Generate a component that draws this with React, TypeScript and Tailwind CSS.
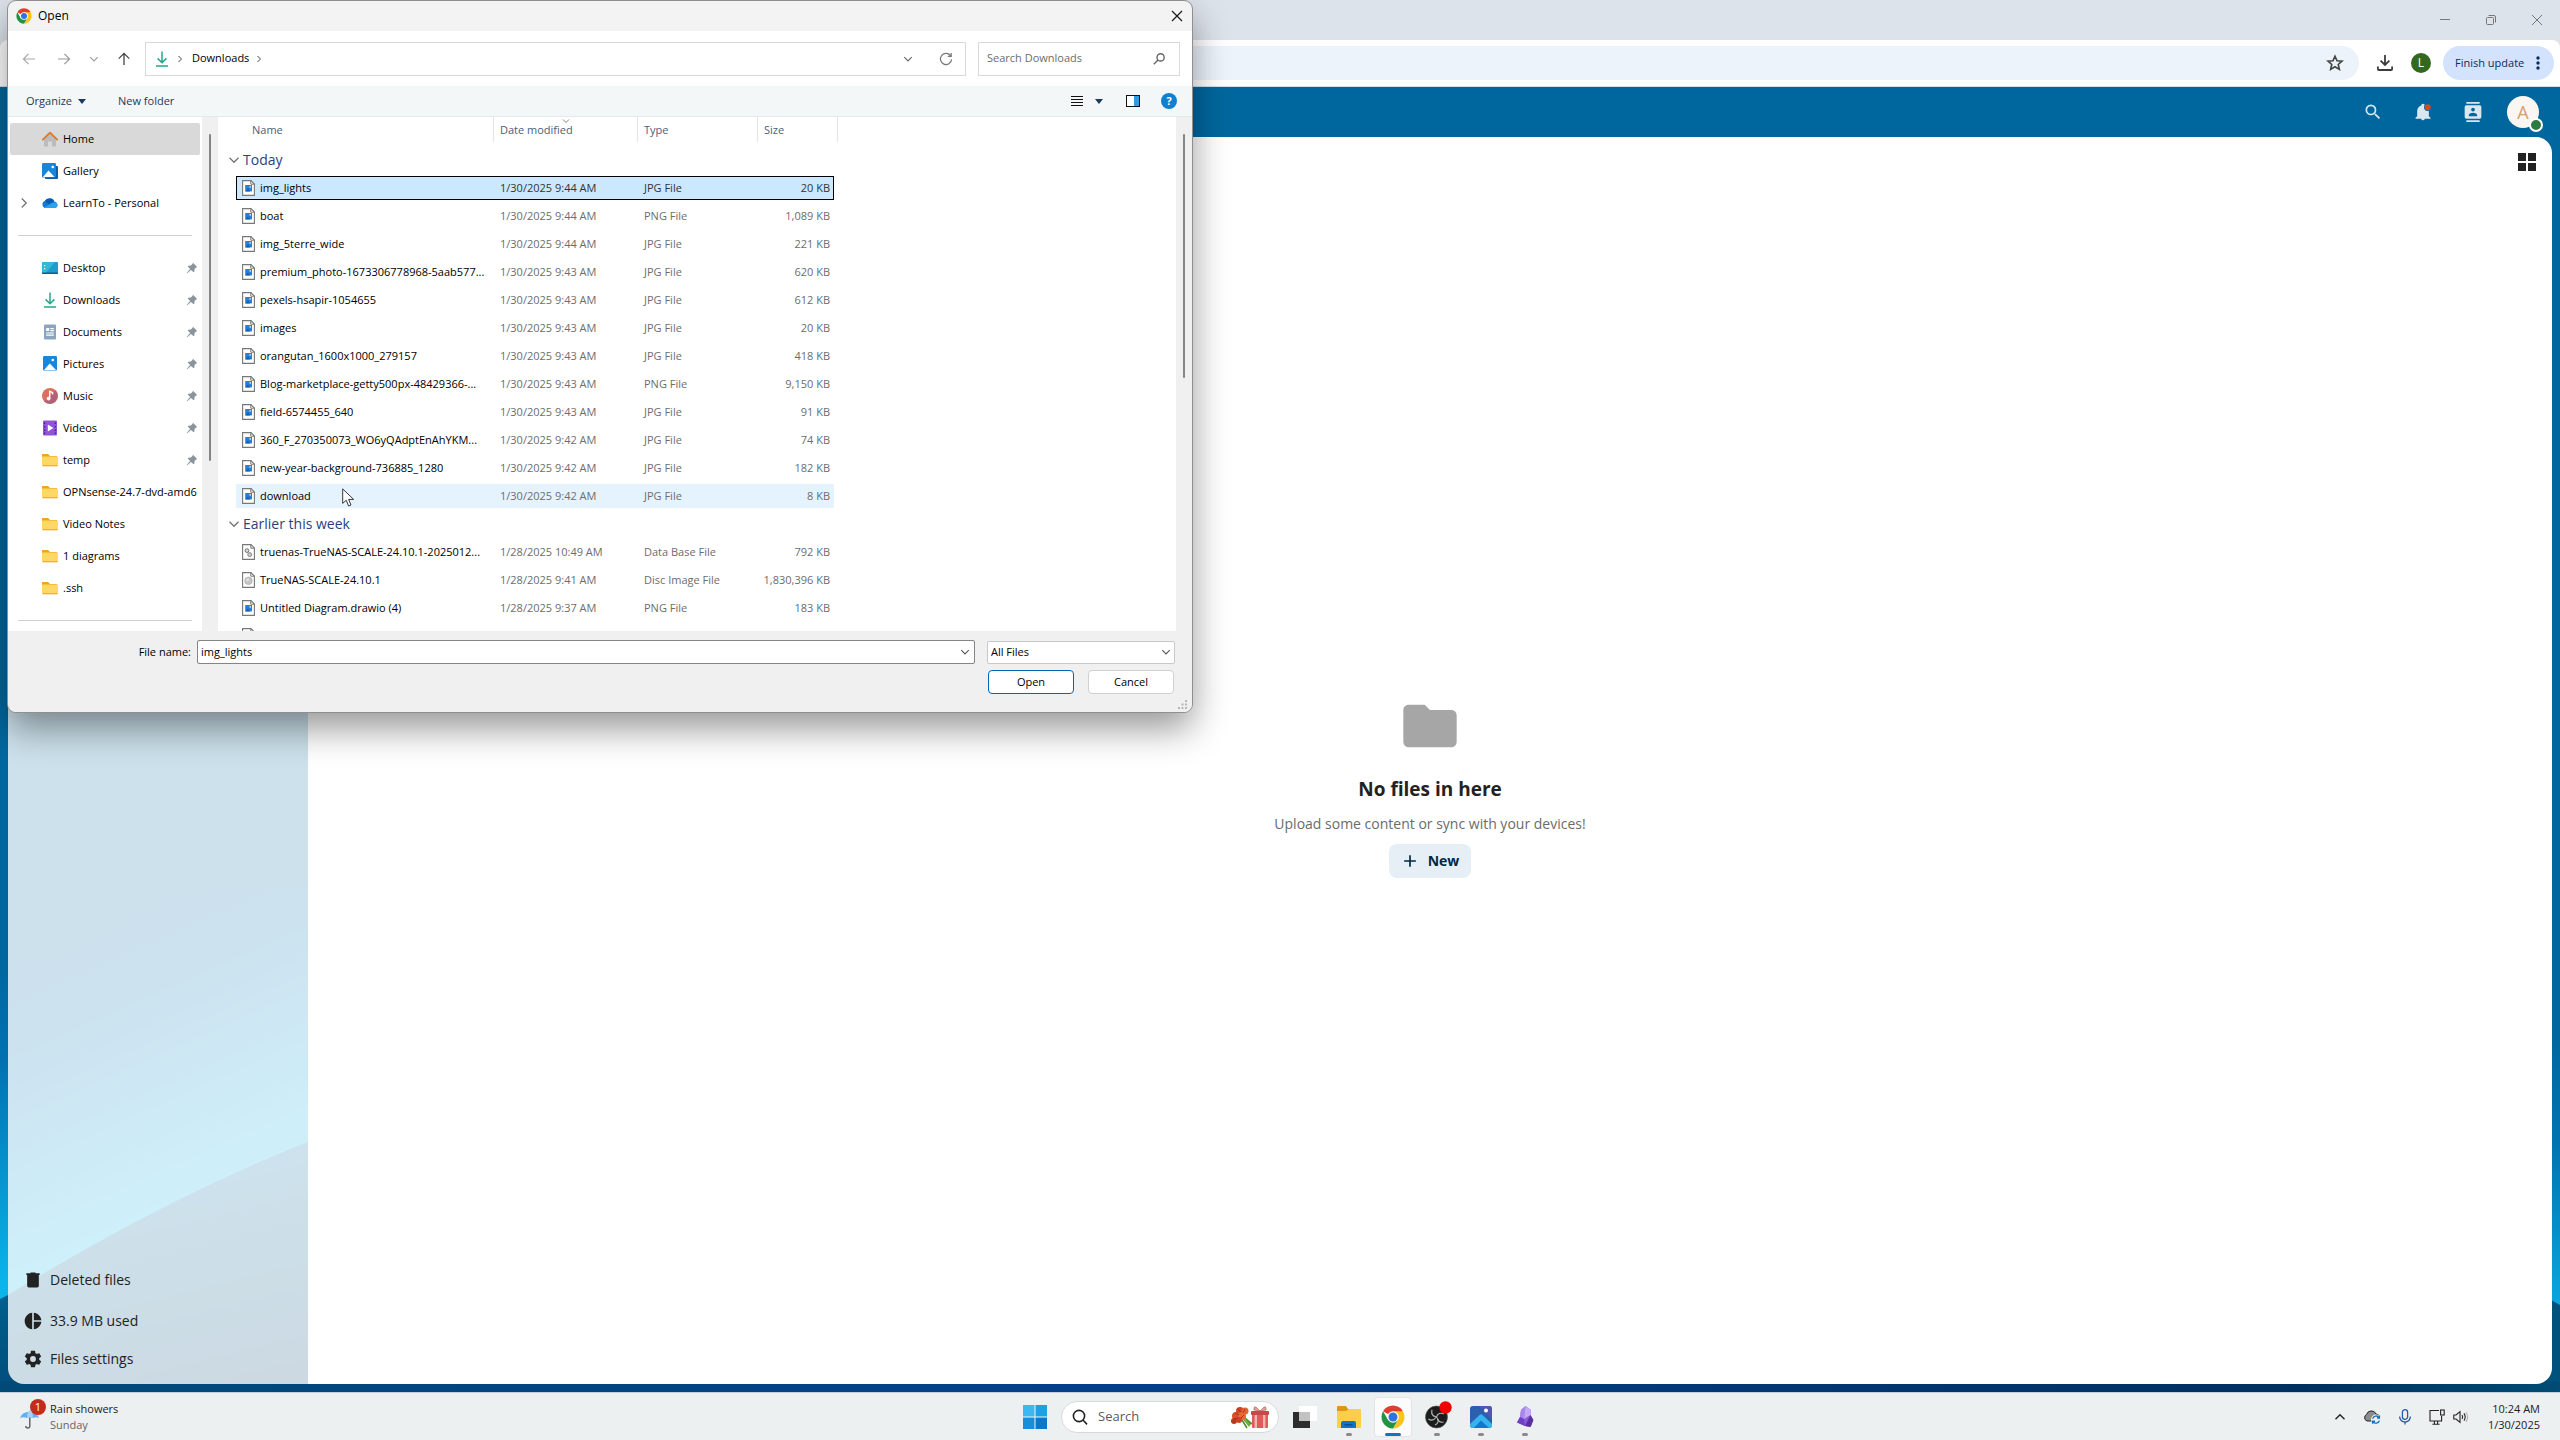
import { useState } from "react";
import type { ReactNode } from "react";

type IconKind = "image" | "db" | "disc";

interface FileRow {
  name: string;
  date: string;
  type: string;
  size: string;
  icon: IconKind;
}

interface Group {
  label: string;
  files: FileRow[];
}

const groups: Group[] = [
  {
    label: "Today",
    files: [
      { name: "img_lights", date: "1/30/2025 9:44 AM", type: "JPG File", size: "20 KB", icon: "image" },
      { name: "boat", date: "1/30/2025 9:44 AM", type: "PNG File", size: "1,089 KB", icon: "image" },
      { name: "img_5terre_wide", date: "1/30/2025 9:44 AM", type: "JPG File", size: "221 KB", icon: "image" },
      { name: "premium_photo-1673306778968-5aab577...", date: "1/30/2025 9:43 AM", type: "JPG File", size: "620 KB", icon: "image" },
      { name: "pexels-hsapir-1054655", date: "1/30/2025 9:43 AM", type: "JPG File", size: "612 KB", icon: "image" },
      { name: "images", date: "1/30/2025 9:43 AM", type: "JPG File", size: "20 KB", icon: "image" },
      { name: "orangutan_1600x1000_279157", date: "1/30/2025 9:43 AM", type: "JPG File", size: "418 KB", icon: "image" },
      { name: "Blog-marketplace-getty500px-48429366-...", date: "1/30/2025 9:43 AM", type: "PNG File", size: "9,150 KB", icon: "image" },
      { name: "field-6574455_640", date: "1/30/2025 9:43 AM", type: "JPG File", size: "91 KB", icon: "image" },
      { name: "360_F_270350073_WO6yQAdptEnAhYKM...", date: "1/30/2025 9:42 AM", type: "JPG File", size: "74 KB", icon: "image" },
      { name: "new-year-background-736885_1280", date: "1/30/2025 9:42 AM", type: "JPG File", size: "182 KB", icon: "image" },
      { name: "download", date: "1/30/2025 9:42 AM", type: "JPG File", size: "8 KB", icon: "image" },
    ],
  },
  {
    label: "Earlier this week",
    files: [
      { name: "truenas-TrueNAS-SCALE-24.10.1-2025012...", date: "1/28/2025 10:49 AM", type: "Data Base File", size: "792 KB", icon: "db" },
      { name: "TrueNAS-SCALE-24.10.1", date: "1/28/2025 9:41 AM", type: "Disc Image File", size: "1,830,396 KB", icon: "disc" },
      { name: "Untitled Diagram.drawio (4)", date: "1/28/2025 9:37 AM", type: "PNG File", size: "183 KB", icon: "image" },
      { name: "", date: "", type: "", size: "", icon: "image" },
    ],
  },
];

function ChromeLogo({ className }: { className: string }) {
  return (
    <svg viewBox="0 0 48 48" className={className} aria-hidden="true">
      <circle cx="24" cy="24" r="23" fill="#fff" />
      <path d="M24 24 L4.1 12.5 A23 23 0 0 1 43.9 12.5 Z" fill="#e33b2e" />
      <path d="M24 12.5 H43.9 A23 23 0 0 1 24 47 L34 29.8 Z" fill="#fcc31e" />
      <path d="M4.1 12.5 A23 23 0 0 0 24 47 L34 29.7 L14 29.7 Z" fill="#229342" />
      <circle cx="24" cy="24" r="11.5" fill="#fff" />
      <circle cx="24" cy="24" r="9" fill="#2f72e4" />
    </svg>
  );
}

function Chevron({ className, dir = "down" }: { className: string; dir?: "down" | "right" | "up" }) {
  const d = { down: "M2 5 L8 11 L14 5", right: "M5 2 L11 8 L5 14", up: "M2 11 L8 5 L14 11" }[dir];
  return (
    <svg viewBox="0 0 16 16" className={className} fill="none" stroke="currentColor" strokeWidth="1.8" aria-hidden="true">
      <path d={d} />
    </svg>
  );
}

function FileIcon({ kind }: { kind: IconKind }) {
  return (
    <svg viewBox="0 0 13 16" className="h-4 w-[13px] shrink-0" aria-hidden="true">
      <path d="M.6 .6 H9 L12.4 4 V15.4 H.6 Z" fill="#fff" stroke="#777" strokeWidth="1.1" />
      <path d="M8.8 .6 V4.2 H12.4" fill="none" stroke="#777" />
      {kind === "image" && (
        <>
          <rect x="3.2" y="5" width="6.8" height="6.4" fill="#2a7fd0" />
          <path d="M3.2 11.4 L6 8.2 L8.2 11.4 Z" fill="#1c5fa8" />
          <circle cx="8.2" cy="6.8" r=".9" fill="#cfe6fa" />
        </>
      )}
      {kind === "db" && (
        <g fill="#d5d5d5" stroke="#777">
          <circle cx="5" cy="6.6" r="1.9" />
          <circle cx="7.7" cy="10.6" r="1.9" />
        </g>
      )}
      {kind === "disc" && (
        <>
          <circle cx="6.5" cy="8.8" r="3.8" fill="#c4c4c4" stroke="#a5a5a5" strokeWidth=".6" />
          <circle cx="5.6" cy="7.8" r="1.6" fill="#e0e0e0" />
        </>
      )}
    </svg>
  );
}

function Pin() {
  return (
    <svg viewBox="0 0 12 12" className="size-3" fill="#8b959c" aria-hidden="true">
      <path d="M7 .8 L11.2 5 L10.2 5.5 L8.6 7.1 L8.3 9.7 L7.5 10.3 L5 7.9 L1.2 11.2 L.8 10.8 L4.1 7 L1.7 4.5 L2.3 3.7 L4.9 3.4 L6.5 1.8 Z" />
    </svg>
  );
}

function DownArrow({ className }: { className: string }) {
  return (
    <svg viewBox="0 0 16 16" className={className} fill="none" stroke="#23a98c" strokeWidth="1.5" aria-hidden="true">
      <path d="M8 .5 V11.5 M3.6 7.4 L8 11.8 L12.4 7.4 M2 15 H14" />
    </svg>
  );
}

function FolderIcon() {
  return (
    <svg viewBox="0 0 16 16" className="size-4" aria-hidden="true">
      <path d="M0 3 a1 1 0 0 1 1 -1 H6 L8 4 H15 V8 H0 Z" fill="#eba614" />
      <rect y="4.4" width="16" height="9.8" rx="1" fill="#ffd766" />
      <rect x=".4" y="13" width="15.2" height="1.2" rx=".6" fill="#eab43a" />
    </svg>
  );
}

function PictureIcon({ stacked }: { stacked?: boolean }) {
  return (
    <svg viewBox="0 0 16 16" className="size-4" aria-hidden="true">
      {stacked && <rect x="3" y="3" width="13" height="13" rx="1" fill="#0d5ea6" />}
      <rect x={stacked ? 0 : 1} y="0" width="14" height="14.5" rx="1.2" fill="#1a86d9" />
      <path d={stacked ? "M1 14 L6.5 7.5 L12.5 14 Z" : "M2 14 L7.8 7.5 L14 14 Z"} fill="#fff" />
      <circle cx="10.8" cy="4" r="1.3" fill="#fff" />
    </svg>
  );
}

const placeIcons: Record<string, ReactNode> = {
  home: (
    <svg viewBox="0 0 16 16" className="size-4" aria-hidden="true">
      <path d="M2 8 L8 2.5 L14 8 V14.5 a1 1 0 0 1 -1 1 H10 V10.5 H6 V15.5 H3 a1 1 0 0 1 -1 -1 Z" fill="#bcbcbc" />
      <path d="M.8 8.6 L8 1.6 L15.2 8.6" fill="none" stroke="#dc7a2a" strokeWidth="1.8" strokeLinejoin="round" strokeLinecap="round" />
    </svg>
  ),
  gallery: <PictureIcon stacked />,
  cloud: (
    <svg viewBox="0 0 16 16" className="size-4" aria-hidden="true">
      <path d="M3.6 13 A3.6 3.6 0 0 1 3 6 A5.2 5.2 0 0 1 12.4 6.4 A3.4 3.4 0 0 1 12.8 13 Z" fill="#0f78d4" />
      <path d="M3 6 A5.2 5.2 0 0 1 12 6 L7 9.4 Z" fill="#0a5cb0" />
      <path d="M2 12.4 L9 8.4 Q14 6 15.8 9.8 A3.3 3.3 0 0 1 12.8 13 H3.6 Z" fill="#2ba2ec" />
    </svg>
  ),
  desktop: (
    <svg viewBox="0 0 16 16" className="size-4" aria-hidden="true">
      <rect y="2" width="16" height="12" rx="1" fill="#1f9ccb" />
      <path d="M0 3 a1 1 0 0 1 1 -1 H13 L3 14 H1 a1 1 0 0 1 -1 -1 Z" fill="#33b9d8" />
      <path d="M2 5h1.2v1.2H2z M2 8h1.2v1.2H2z" fill="#fff" />
      <path d="M0 12.6 H16 V13 a1 1 0 0 1 -1 1 H1 a1 1 0 0 1 -1 -1 Z" fill="#0b5d96" />
    </svg>
  ),
  downloads: <DownArrow className="size-4" />,
  documents: (
    <svg viewBox="0 0 16 16" className="size-4" aria-hidden="true">
      <rect x="2" y=".5" width="12" height="15" rx="1" fill="#8ba4bf" />
      <path d="M4.2 4h3v3h-3z M8.4 4h3.4v1.2H8.4z M8.4 6h3.4v1.2H8.4z M4.2 8.4h7.6v1.2H4.2z M4.2 10.6h7.6v1.2H4.2z" fill="#fff" />
    </svg>
  ),
  pictures: <PictureIcon />,
  music: (
    <svg viewBox="0 0 16 16" className="size-4" aria-hidden="true">
      <circle cx="8" cy="8" r="8" fill="#d9715f" />
      <path d="M13.6 2.3 A8 8 0 0 1 2.3 13.6 Z" fill="#b65f7c" />
      <circle cx="6.6" cy="10.6" r="1.9" fill="#fff" />
      <path d="M7.7 10.6 V3.4 L10.6 4.6 V6.6" fill="none" stroke="#fff" strokeWidth="1.4" />
    </svg>
  ),
  videos: (
    <svg viewBox="0 0 16 16" className="size-4" aria-hidden="true">
      <rect x="1" y=".5" width="14" height="15" rx="1" fill="#9153d8" />
      <path d="M2 2.5h1.2v1.4H2z M2 6h1.2v1.4H2z M2 9.5h1.2v1.4H2z M2 12.6h1.2v1.4H2z M12.8 2.5H14v1.4h-1.2z M12.8 6H14v1.4h-1.2z M12.8 9.5H14v1.4h-1.2z M12.8 12.6H14v1.4h-1.2z" fill="#43208a" />
      <path d="M5.8 4.6 L11.4 8 L5.8 11.4 Z" fill="#fff" />
    </svg>
  ),
  folder: <FolderIcon />,
};

const topPlaces = [
  { label: "Home", icon: "home" },
  { label: "Gallery", icon: "gallery" },
  { label: "LearnTo - Personal", icon: "cloud" },
];

const pinnedPlaces = [
  { label: "Desktop", icon: "desktop", pinned: true },
  { label: "Downloads", icon: "downloads", pinned: true },
  { label: "Documents", icon: "documents", pinned: true },
  { label: "Pictures", icon: "pictures", pinned: true },
  { label: "Music", icon: "music", pinned: true },
  { label: "Videos", icon: "videos", pinned: true },
  { label: "temp", icon: "folder", pinned: true },
  { label: "OPNsense-24.7-dvd-amd6", icon: "folder", pinned: false },
  { label: "Video Notes", icon: "folder", pinned: false },
  { label: "1 diagrams", icon: "folder", pinned: false },
  { label: ".ssh", icon: "folder", pinned: false },
];

function Place({ label, icon, pinned, active }: { label: string; icon: string; pinned?: boolean; active?: boolean }) {
  return (
    <button
      className={`relative flex h-8 w-full items-center gap-[5px] rounded-xs pl-8 text-left whitespace-nowrap ${
        active ? "bg-[#d9d9d9]" : ""
      }`}
    >
      {icon === "cloud" && <Chevron dir="right" className="absolute left-2 size-3 text-[#777]" />}
      <span className="shrink-0">{placeIcons[icon]}</span>
      <span>{label}</span>
      {pinned && (
        <span className="absolute right-0.5">
          <Pin />
        </span>
      )}
    </button>
  );
}

function FileTable({ selected, onSelect }: { selected: string; onSelect: (n: string) => void }) {
  return (
    <table className="-mt-1 ml-4 w-[598px] table-fixed border-separate border-spacing-x-0 border-spacing-y-1 whitespace-nowrap">
      <colgroup>
        <col className="w-[258px]" />
        <col className="w-36" />
        <col className="w-[120px]" />
        <col className="w-[76px]" />
      </colgroup>
      <thead className="text-[#4c607a]">
        <tr className="h-[25px]">
          <th className="p-0 text-left font-normal">
            <div className="h-[25px] border-r border-[#e5e5e5] pl-4 leading-[25px]">Name</div>
          </th>
          <th className="relative p-0 text-left font-normal">
            <Chevron className="absolute top-0 left-[68px] size-2 text-[#777]" />
            <div className="h-[25px] border-r border-[#e5e5e5] pl-1.5 leading-[25px]">Date modified</div>
          </th>
          <th className="p-0 text-left font-normal">
            <div className="h-[25px] border-r border-[#e5e5e5] pl-1.5 leading-[25px]">Type</div>
          </th>
          <th className="p-0 text-left font-normal">
            <div className="h-[25px] w-20 border-r border-[#e5e5e5] pl-1.5 leading-[25px]">Size</div>
          </th>
        </tr>
      </thead>
      {groups.map((g, i) => (
        <tbody key={g.label}>
          <tr className={i === 0 ? "h-[26px]" : "h-6"}>
            <td colSpan={4} className="p-0 align-bottom">
              <div className="-ml-2 flex h-6 items-center gap-[3px] text-sm text-[#2b3f7e]">
                <Chevron className="size-3 text-[#777]" />
                {g.label}
              </div>
            </td>
          </tr>
          {g.files.map((f) => {
            const isSelected = f.name !== "" && f.name === selected;
            return (
              <tr
                key={f.name}
                onClick={() => onSelect(f.name)}
                className={`h-6 ${
                  isSelected
                    ? "bg-[#cce8ff] text-[#333] outline outline-black -outline-offset-1"
                    : f.name === "download"
                      ? "bg-[#e5f3ff] text-[#6d6d6d]"
                      : "text-[#6d6d6d]"
                }`}
              >
                <td className="p-0">
                  <div className="flex items-center gap-[5px] pl-1.5 text-black">
                    <FileIcon kind={f.icon} />
                    {f.name}
                  </div>
                </td>
                <td className="p-0 pl-1.5">{f.date}</td>
                <td className="p-0 pl-1.5">{f.type}</td>
                <td className="p-0 pr-1 text-right">{f.size}</td>
              </tr>
            );
          })}
        </tbody>
      ))}
    </table>
  );
}

function OpenDialog() {
  const [selected, setSelected] = useState("img_lights");

  return (
    <div className="absolute top-px left-2 z-10 w-[1184px] overflow-hidden rounded-lg bg-white font-['Open_Sans',sans-serif] text-[11px] text-black shadow-[0_16px_36px_rgba(0,0,0,0.42)] outline outline-[#8f8f8f]">
      {/* Title bar */}
      <div className="flex h-[30px] items-center bg-[#f3f3f3] pr-2 pl-2">
        <ChromeLogo className="size-4" />
        <span className="ml-1.5 text-xs">Open</span>
        <button aria-label="Close" className="ml-auto p-px">
          <svg viewBox="0 0 12 12" className="size-3" stroke="#111" strokeWidth="1.1">
            <path d="M1 1 L11 11 M11 1 L1 11" />
          </svg>
        </button>
      </div>

      {/* Navigation */}
      <div className="flex h-[55px] items-center pr-3 pl-3.5">
        <button aria-label="Back" className="text-[#aaa]">
          <svg viewBox="0 0 14 14" className="size-3.5" fill="none" stroke="currentColor" strokeWidth="1.2">
            <path d="M13 7 H1.4 M6.6 1.8 L1.4 7 L6.6 12.2" />
          </svg>
        </button>
        <button aria-label="Forward" className="ml-[21px] text-[#999]">
          <svg viewBox="0 0 14 14" className="size-3.5" fill="none" stroke="currentColor" strokeWidth="1.2">
            <path d="M1 7 H12.6 M7.4 1.8 L12.6 7 L7.4 12.2" />
          </svg>
        </button>
        <button aria-label="Recent locations" className="ml-[18px] text-[#999]">
          <Chevron className="size-2.5" />
        </button>
        <button aria-label="Up" className="ml-[18px] text-[#444]">
          <svg viewBox="0 0 14 14" className="size-3.5" fill="none" stroke="currentColor" strokeWidth="1.3">
            <path d="M7 13 V1.4 M1.8 6.6 L7 1.4 L12.2 6.6" />
          </svg>
        </button>
        <div className="ml-3.5 flex h-[34px] flex-1 items-center border border-[#d9d9d9] pr-3 pl-2">
          <DownArrow className="size-4" />
          <Chevron dir="right" className="ml-1.5 size-2 text-[#333]" />
          <span className="ml-2">Downloads</span>
          <Chevron dir="right" className="ml-1.5 size-2 text-[#333]" />
          <button aria-label="Previous locations" className="ml-auto text-[#666]">
            <Chevron className="size-2.5" />
          </button>
          <button aria-label="Refresh" className="ml-[26px] text-[#777]">
            <svg viewBox="0 0 14 14" className="size-3.5" fill="none" stroke="currentColor" strokeWidth="1.2">
              <path d="M11.8 4 A5.6 5.6 0 1 0 12.6 7.4 M12.2 1 V4.4 H8.8" />
            </svg>
          </button>
        </div>
        <label className="ml-3 flex h-[34px] w-[202px] items-center border border-[#d9d9d9] pr-3.5 pl-2">
          <input aria-label="Search Downloads" placeholder="Search Downloads" className="min-w-0 flex-1 outline-none placeholder:text-[#6d6d6d]" />
          <svg viewBox="0 0 12 12" className="size-3" fill="none" stroke="#666" strokeWidth="1.4" aria-hidden="true">
            <circle cx="7.6" cy="4.4" r="3.6" />
            <path d="M5 7 L.8 11.2" />
          </svg>
        </label>
      </div>

      {/* Command bar */}
      <div className="flex h-[31px] items-center border-b border-[#e6e9e9] bg-[#f4f7f7] pr-[15px] pl-[18px] text-[#1e3a5a]">
        <button className="flex items-center gap-1.5">
          Organize
          <svg viewBox="0 0 8 5" className="h-[5px] w-2" fill="currentColor">
            <path d="M0 0 H8 L4 5 Z" />
          </svg>
        </button>
        <button className="ml-8">New folder</button>
        <button aria-label="Change your view" className="ml-auto flex items-center gap-3">
          <svg viewBox="0 0 12 12" className="size-3" stroke="#111" strokeWidth="1">
            <path d="M0 1.5 H12 M0 4.5 H12 M0 7.5 H12 M0 10.5 H12" />
          </svg>
          <svg viewBox="0 0 8 5" className="h-[5px] w-2" fill="currentColor">
            <path d="M0 0 H8 L4 5 Z" />
          </svg>
        </button>
        <button aria-label="Preview pane" className="ml-[23px]">
          <svg viewBox="0 0 14 12" className="h-3 w-3.5">
            <rect x=".5" y=".5" width="13" height="11" fill="#fff" stroke="#111" />
            <rect x="8" y="1" width="5" height="10" fill="#2b9de0" />
          </svg>
        </button>
        <button aria-label="Help" className="ml-[21px] flex size-4 items-center justify-center rounded-full bg-[#0f80d0] text-[11px] font-bold text-white">
          ?
        </button>
      </div>

      {/* Places and files */}
      <div className="flex h-[514px] overflow-hidden">
        <nav aria-label="Places" className="w-[194px] px-0.5 pt-1.5">
          {topPlaces.map((p) => (
            <Place key={p.label} {...p} active={p.label === "Home"} />
          ))}
          <hr className="mx-2 my-4 border-[#d0d0d0]" />
          {pinnedPlaces.map((p) => (
            <Place key={p.label} {...p} />
          ))}
          <hr className="mx-2 mt-4 border-[#d0d0d0]" />
        </nav>
        <div className="w-4 bg-[#f0f0f0] pt-[17px] pl-[7px]">
          <div className="h-[327px] w-0.5 rounded-full bg-[#858585]" />
        </div>
        <div className="ml-0.5 min-w-0 flex-1 overflow-hidden">
          <FileTable selected={selected} onSelect={setSelected} />
        </div>
        <div className="w-4 bg-[#f0f0f0] pt-[17px] pl-[7px]">
          <div className="h-[244px] w-0.5 rounded-full bg-[#858585]" />
        </div>
      </div>

      {/* Footer */}
      <div className="relative h-[81px] bg-[#f0f0f0] pt-[9px] pr-[17px]">
        <div className="flex items-center">
          <label htmlFor="file-name" className="w-[183px] text-right">
            File name:
          </label>
          <div className="ml-1.5 flex h-6 flex-1 items-center rounded-xs border border-[#858585] bg-white pr-1 pl-[3px]">
            <input
              id="file-name"
              value={selected}
              onChange={(e) => setSelected(e.target.value)}
              className="min-w-0 flex-1 outline-none"
            />
            <Chevron className="size-2.5 text-[#555]" />
          </div>
          <div className="relative ml-3 flex w-[188px] items-center">
            <select aria-label="File type" className="h-[23px] w-full appearance-none rounded-xs border border-[#c8c8c8] bg-white pl-[3px]">
              <option>All Files</option>
            </select>
            <Chevron className="pointer-events-none absolute right-1 size-2.5 text-[#555]" />
          </div>
        </div>
        <div className="mt-1.5 mr-px flex justify-end gap-3.5">
          <button className="h-6 w-[86px] rounded-sm border border-[#0067b8] bg-white">Open</button>
          <button className="h-6 w-[86px] rounded-sm border border-[#d0d0d0] bg-white">Cancel</button>
        </div>
        <svg viewBox="0 0 10 10" className="absolute right-1 bottom-0.5 size-2.5" fill="#b8b8b8" aria-hidden="true">
          <path d="M7 0h2v2H7z M7 3.5h2v2H7z M3.5 3.5h2v2h-2z M7 7h2v2H7z M3.5 7h2v2h-2z M0 7h2v2H0z" />
        </svg>
      </div>
    </div>
  );
}

function BrowserBar() {
  return (
    <div className="bg-[#dde3ea]">
      <div className="flex h-10 items-center justify-end gap-9 pr-[18px] text-[#777]">
        <button aria-label="Minimize">
          <svg viewBox="0 0 10 10" className="size-2.5" stroke="currentColor">
            <path d="M0 4.5 H10" />
          </svg>
        </button>
        <button aria-label="Restore">
          <svg viewBox="0 0 10 10" className="size-2.5" fill="none" stroke="currentColor">
            <rect x=".5" y="2.5" width="7" height="7" rx="1" />
            <path d="M2.5 .5 H8 a1.5 1.5 0 0 1 1.5 1.5 V7.5" />
          </svg>
        </button>
        <button aria-label="Close window">
          <svg viewBox="0 0 10 10" className="size-2.5" stroke="currentColor">
            <path d="M0 0 L10 10 M10 0 L0 10" />
          </svg>
        </button>
      </div>
      <div className="flex h-[47px] items-center rounded-t-lg border-b border-[#cfe0ec] bg-white pr-1.5 pl-36">
        <div className="flex h-[34px] flex-1 items-center justify-end rounded-full bg-[#ecf3fb] pr-[15px]">
          <button aria-label="Bookmark">
            <svg viewBox="0 0 24 24" className="size-[18px]" fill="none" stroke="#444" strokeWidth="2.2">
              <path d="M12 3 L14.7 9 L21.3 9.6 L16.3 14 L17.8 20.5 L12 17 L6.2 20.5 L7.7 14 L2.7 9.6 L9.3 9 Z" />
            </svg>
          </button>
        </div>
        <button aria-label="Downloads" className="ml-[18px]">
          <svg viewBox="0 0 16 16" className="size-4" fill="none" stroke="#3c3c3c" strokeWidth="1.8">
            <path d="M8 0 V9.4 M3.6 5.6 L8 10 L12.4 5.6 M.9 11.4 V14 a1 1 0 0 0 1 1 H14.1 a1 1 0 0 0 1 -1 V11.4" />
          </svg>
        </button>
        <button aria-label="Profile" className="ml-[18px] flex size-5 items-center justify-center rounded-full bg-[#33691e] text-xs text-white">
          L
        </button>
        <button className="ml-3 flex h-[34px] w-[111px] items-center justify-between rounded-full bg-[#d3e3fd] pr-3.5 pl-3 text-[11px] whitespace-nowrap text-[#0b2b5c]">
          Finish update
          <svg viewBox="0 0 4 14" className="h-3.5 w-1" fill="currentColor">
            <circle cx="2" cy="2" r="1.7" />
            <circle cx="2" cy="7" r="1.7" />
            <circle cx="2" cy="12" r="1.7" />
          </svg>
        </button>
      </div>
    </div>
  );
}

function Wallpaper() {
  return (
    <svg viewBox="0 0 2560 1305" preserveAspectRatio="none" className="absolute inset-0 size-full" aria-hidden="true">
      <defs>
        <linearGradient id="glow" gradientUnits="userSpaceOnUse" x1="30" y1="860" x2="150" y2="1130">
          <stop offset="0" stopColor="#00679e" />
          <stop offset=".3" stopColor="#0070b0" />
          <stop offset="1" stopColor="#0bb4ea" />
        </linearGradient>
        <linearGradient id="glowRight" gradientUnits="userSpaceOnUse" x1="0" y1="950" x2="0" y2="1215">
          <stop offset="0" stopColor="#00679e" />
          <stop offset=".4" stopColor="#0074b0" />
          <stop offset="1" stopColor="#0aa5dd" />
        </linearGradient>
        <linearGradient id="hill" gradientUnits="userSpaceOnUse" x1="200" y1="1060" x2="260" y2="1305">
          <stop offset="0" stopColor="#0a74b0" />
          <stop offset=".5" stopColor="#005a86" />
          <stop offset="1" stopColor="#023f72" />
        </linearGradient>
        <linearGradient id="floor">
          <stop offset="0" stopColor="#004a78" />
          <stop offset=".45" stopColor="#043f8a" />
          <stop offset=".9" stopColor="#00305f" />
          <stop offset="1" stopColor="#004c74" />
        </linearGradient>
      </defs>
      <rect width="2560" height="1305" fill="#00679e" />
      <rect y="800" width="320" height="505" fill="url(#glow)" />
      <path d="M0 1212 L8 1208 Q170 1108 320 1050 V1305 H0 Z" fill="url(#hill)" />
      <rect x="2540" y="950" width="20" height="300" fill="url(#glowRight)" />
      <path d="M2540 1207 L2560 1218 V1305 H2540 Z" fill="#00517c" />
      <rect y="1294" width="2560" height="11" fill="url(#floor)" />
    </svg>
  );
}

function NextcloudPage() {
  const navItems = [
    { label: "Deleted files", height: "h-[42px]", path: "M9 3V4H4V6H5V19A2 2 0 0 0 7 21H17A2 2 0 0 0 19 19V6H20V4H15V3Z" },
    {
      label: "33.9 MB used",
      height: "h-10",
      path: "M11 2V22C5.9 21.5 2 17.2 2 12S5.9 2.5 11 2M13 2V11H22C21.5 6.2 17.8 2.5 13 2M13 13V22C17.7 21.5 21.5 17.8 22 13Z",
    },
    {
      label: "Files settings",
      height: "h-9",
      path: "M12,15.5A3.5,3.5 0 0,1 8.5,12A3.5,3.5 0 0,1 12,8.5A3.5,3.5 0 0,1 15.5,12A3.5,3.5 0 0,1 12,15.5M19.43,12.97C19.47,12.65 19.5,12.33 19.5,12C19.5,11.67 19.47,11.34 19.43,11L21.54,9.37C21.73,9.22 21.78,8.95 21.66,8.73L19.66,5.27C19.54,5.05 19.27,4.96 19.05,5.05L16.56,6.05C16.04,5.66 15.5,5.32 14.87,5.07L14.5,2.42C14.46,2.18 14.25,2 14,2H10C9.75,2 9.54,2.18 9.5,2.42L9.13,5.07C8.5,5.32 7.96,5.66 7.44,6.05L4.95,5.05C4.73,4.96 4.46,5.05 4.34,5.27L2.34,8.73C2.21,8.95 2.27,9.22 2.46,9.37L4.57,11C4.53,11.34 4.5,11.67 4.5,12C4.5,12.33 4.53,12.65 4.57,12.97L2.46,14.63C2.27,14.78 2.21,15.05 2.34,15.27L4.34,18.73C4.46,18.95 4.73,19.03 4.95,18.95L7.44,17.94C7.96,18.34 8.5,18.68 9.13,18.93L9.5,21.58C9.54,21.82 9.75,22 10,22H14C14.25,22 14.46,21.82 14.5,21.58L14.87,18.93C15.5,18.67 16.04,18.34 16.56,17.94L19.05,18.95C19.27,19.03 19.54,18.95 19.66,18.73L21.66,15.27C21.78,15.05 21.73,14.78 21.54,14.63L19.43,12.97Z",
    },
  ];

  return (
    <div className="relative flex flex-1 flex-col">
      <Wallpaper />
      <header className="relative flex h-[50px] items-center justify-end pr-3 text-[#d9e8f0]">
        <button aria-label="Search" className="flex w-[50px] justify-center">
          <svg viewBox="0 0 24 24" className="size-5" fill="currentColor">
            <path d="M9.5,3A6.5,6.5 0 0,1 16,9.5C16,11.11 15.41,12.59 14.44,13.73L14.71,14H15.5L20.5,19L19,20.5L14,15.5V14.71L13.73,14.44C12.59,15.41 11.11,16 9.5,16A6.5,6.5 0 0,1 3,9.5A6.5,6.5 0 0,1 9.5,3M9.5,5C7,5 5,7 5,9.5C5,12 7,14 9.5,14C12,14 14,12 14,9.5C14,7 12,5 9.5,5Z" />
          </svg>
        </button>
        <button aria-label="Notifications" className="flex w-[50px] justify-center">
          <svg viewBox="0 0 24 24" className="size-5" fill="currentColor">
            <path d="M14 20A2 2 0 0 1 10 20H14M12 2A2 2 0 0 0 10 4.3C7.1 5.2 5 7.9 5 11V17L3 19V20H21V19L19 17V11C19 7.9 16.9 5.2 14 4.3A2 2 0 0 0 12 2Z" />
            <circle cx="17.6" cy="6.4" r="4.4" fill="#00679e" />
            <circle cx="17.6" cy="6.4" r="3.6" fill="#d9481c" />
          </svg>
        </button>
        <button aria-label="Contacts" className="flex w-[50px] justify-center">
          <svg viewBox="0 0 24 24" className="size-5" fill="currentColor">
            <path d="M20,0H4V2H20V0M4,24H20V22H4V24M20,4H4A2,2 0 0,0 2,6V18A2,2 0 0,0 4,20H20A2,2 0 0,0 22,18V6A2,2 0 0,0 20,4M12,6.75A2.25,2.25 0 0,1 14.25,9A2.25,2.25 0 0,1 12,11.25A2.25,2.25 0 0,1 9.75,9A2.25,2.25 0 0,1 12,6.75M17,17H7V15.5C7,13.83 10.33,13 12,13C13.67,13 17,13.83 17,15.5V17Z" />
          </svg>
        </button>
        <button aria-label="Account" className="flex w-[50px] justify-center">
          <span className="relative flex size-8 items-center justify-center rounded-full bg-[#faf6f1] text-lg text-[#d6a06c]">
            A
            <span className="absolute -right-1 -bottom-1 size-3.5 rounded-full border-2 border-white bg-[#2d7b41]" />
          </span>
        </button>
      </header>

      <div className="relative flex flex-1 px-2 pb-2">
        <aside className="flex w-[300px] flex-col justify-end rounded-l-2xl bg-white/80 pb-[7px]">
          {navItems.map((n) => (
            <a key={n.label} href="#" className={`flex items-center gap-[7px] pl-[15px] text-sm text-[#222] ${n.height}`}>
              <svg viewBox="0 0 24 24" className="size-5" fill="#222" aria-hidden="true">
                <path fillRule="evenodd" d={n.path} />
              </svg>
              {n.label}
            </a>
          ))}
        </aside>
        <main className="flex flex-1 flex-col rounded-r-2xl bg-white">
          <div className="flex h-[50px] items-center justify-end pr-3.5">
            <button aria-label="Switch to grid view">
              <svg viewBox="0 0 22 22" className="size-[22px]" fill="#222">
                <path d="M2 2h8v8H2z M12 2h8v8h-8z M2 12h8v8H2z M12 12h8v8h-8z" />
              </svg>
            </button>
          </div>
          <div className="flex flex-1 flex-col items-center justify-center">
            <svg viewBox="0 0 24 24" className="size-16" fill="#a6a6a6" aria-hidden="true">
              <path d="M10,4H4C2.89,4 2,4.89 2,6V18A2,2 0 0,0 4,20H20A2,2 0 0,0 22,18V8C22,6.89 21.1,6 20,6H12L10,4Z" />
            </svg>
            <h2 className="mt-4 text-[19px] leading-[30px] font-bold text-[#222]">No files in here</h2>
            <p className="mt-2 text-sm leading-6 text-[#6b6b6b]">Upload some content or sync with your devices!</p>
            <button className="mt-2 flex h-[34px] items-center gap-2 rounded-lg bg-[#e5eff5] pr-3 pl-[11px] text-sm font-bold text-[#00293f]">
              <svg viewBox="0 0 24 24" className="size-5" fill="currentColor" aria-hidden="true">
                <path d="M19,13H13V19H11V13H5V11H11V5H13V11H19V13Z" />
              </svg>
              New
            </button>
          </div>
        </main>
      </div>
    </div>
  );
}

function TaskbarApp({ label, state, children }: { label: string; state?: "open" | "active"; children: ReactNode }) {
  return (
    <button aria-label={label} className="relative flex h-12 w-11 items-center justify-center">
      {state === "active" && <span className="absolute inset-x-[3px] inset-y-1 rounded-sm border border-[#e3e5e5] bg-[#fbfbfb]" />}
      <span className="relative">{children}</span>
      {state === "open" && <span className="absolute bottom-[5px] h-[3px] w-1.5 rounded-full bg-[#8a8a8a]" />}
      {state === "active" && <span className="absolute bottom-[5px] h-[3px] w-4 rounded-full bg-[#1173c5]" />}
    </button>
  );
}

function Taskbar() {
  return (
    <footer className="grid h-12 grid-cols-[1fr_auto_1fr] items-center border-t border-[#c3cfda] bg-[#edf0f0] text-[11px]">
      <button className="relative flex w-fit items-center pl-5 text-left">
        <svg viewBox="0 0 20 20" className="mt-1 size-5" aria-hidden="true">
          <path d="M0 9 A10 9 0 0 1 19 9 Q16 7.4 13 9 Q10 7.4 7 9 Q3.6 7.4 0 9 Z" fill="#62aef2" />
          <path d="M7 9 Q7 3 10 1 Q13 3 13 9 Q10 7.4 7 9 Z" fill="#a4d2fb" />
          <path d="M9.8 8.4 V17 A2 2 0 0 1 5.8 17" fill="none" stroke="#666" strokeWidth="1.5" />
        </svg>
        <span className="absolute -top-0.5 left-[30px] flex size-4 items-center justify-center rounded-full bg-[#c42b1c] text-white">1</span>
        <span className="ml-2.5 leading-4">
          <span className="block text-[#222]">Rain showers</span>
          <span className="block text-[#666]">Sunday</span>
        </span>
      </button>

      <div className="flex items-center">
        <TaskbarApp label="Start">
          <svg viewBox="0 0 23 23" className="size-6">
            <path d="M0 0h11v11H0z" fill="#3bb8f2" />
            <path d="M12 0h11v11H12z" fill="#1fa0e6" />
            <path d="M0 12h11v11H0z" fill="#158fdd" />
            <path d="M12 12h11v11H12z" fill="#0878cf" />
          </svg>
        </TaskbarApp>
        <label className="mx-1 flex h-8 w-[218px] items-center rounded-full border border-[#d8dada] bg-white pr-2 pl-2.5">
          <svg viewBox="0 0 16 16" className="size-4" fill="none" stroke="#222" strokeWidth="1.6" aria-hidden="true">
            <circle cx="7" cy="7" r="5.6" />
            <path d="M11 11 L15 15.4" />
          </svg>
          <input aria-label="Search" placeholder="Search" className="ml-2.5 w-28 min-w-0 text-[13px] outline-none placeholder:text-[#5c5c5c]" />
          <svg viewBox="0 0 40 24" className="ml-auto h-6 w-10" aria-hidden="true">
            <path d="M11 12 L19 22 L22 18 Z" fill="#6fae3e" />
            <path d="M14 12 L22 19 M12 15 L17 23" stroke="#4d8c2b" strokeWidth="1.5" />
            <circle cx="10" cy="6" r="4" fill="#cf4323" />
            <circle cx="15" cy="6" r="3.5" fill="#e06535" />
            <circle cx="6" cy="11" r="4" fill="#d8502c" />
            <circle cx="12" cy="11" r="4" fill="#e8683a" />
            <circle cx="4" cy="16" r="3" fill="#bb391d" />
            <circle cx="9" cy="15" r="3" fill="#cf4323" />
            <path d="M5 8 L9 10 M8 4 L11 7 M13 8 L15 4 M4 14 L8 13 M11 13 L14 10" stroke="#a52c12" strokeWidth=".8" />
            <rect x="22" y="8" width="16" height="15" rx="1" fill="#df5b5b" />
            <rect x="21" y="6" width="18" height="4" rx="1" fill="#c74848" />
            <path d="M24.6 10h2.4v13h-2.4z M33 10h2.4v13H33z" fill="#f0b7b0" />
            <path d="M30 6 Q23 -2 24 5 Z M30 6 Q37 -2 36 5 Z" fill="#e8a39a" stroke="#b0504a" strokeWidth=".6" />
          </svg>
        </label>
        <TaskbarApp label="Task view">
          <svg viewBox="0 0 24 24" className="size-6">
            <rect x="0" y="7" width="17" height="16" fill="#2d2d2d" />
            <rect x="6" y="1" width="18" height="15" fill="#fff" />
            <rect x="6" y="7" width="11" height="9" fill="#c2c2c2" />
          </svg>
        </TaskbarApp>
        <TaskbarApp label="File Explorer" state="open">
          <svg viewBox="0 0 24 24" className="size-6">
            <path d="M0 2 a1 1 0 0 1 1 -1 H9 L11 4 H22 V9 H0 Z" fill="#d99a12" />
            <path d="M0 6 H9 L12 4 H23 a1 1 0 0 1 1 1 V22 a1 1 0 0 1 -1 1 H1 a1 1 0 0 1 -1 -1 Z" fill="#fccf4b" />
            <path d="M4 23 V18 a2 2 0 0 1 2 -2 H17 a2 2 0 0 1 2 2 V23 Z" fill="#1273c4" />
            <rect x="7.5" y="19" width="8" height="1.6" fill="#0a4f91" />
          </svg>
        </TaskbarApp>
        <TaskbarApp label="Google Chrome" state="active">
          <ChromeLogo className="size-6" />
        </TaskbarApp>
        <TaskbarApp label="OBS Studio" state="open">
          <svg viewBox="0 0 24 24" className="size-6 overflow-visible">
            <circle cx="11.5" cy="12" r="11" fill="#1c1c1c" stroke="#555" strokeWidth=".6" />
            <g fill="none" stroke="#b8b8b8" strokeWidth="1.1">
              <path d="M7 4.6 Q5.4 11 11.5 12" />
              <path d="M19 9 Q13.4 6.6 11.5 12" />
              <path d="M10 20 Q15.6 17 11.5 12" />
              <path d="M3.4 14 Q7.6 17 11.5 12 M18.6 17 Q14 18 12.6 14" />
            </g>
            <circle cx="20.5" cy="2.5" r="6.2" fill="#f40000" />
          </svg>
        </TaskbarApp>
        <TaskbarApp label="Photos" state="open">
          <svg viewBox="0 0 24 24" className="size-6">
            <rect x="1" y="1" width="22" height="22" rx="3" fill="#2c5fae" />
            <path d="M10 1 H20 a3 3 0 0 1 3 3 V14 Z" fill="#5354b4" />
            <path d="M1 19 L10.5 10 a2 2 0 0 1 3 0 L23 19 V20 a3 3 0 0 1 -3 3 H4 a3 3 0 0 1 -3 -3 Z" fill="#35b4f0" />
            <path d="M4.6 23 L12 15.6 L20 23 Z" fill="#1378d0" />
            <circle cx="17" cy="5.4" r="2" fill="#fff" />
          </svg>
        </TaskbarApp>
        <TaskbarApp label="Obsidian" state="open">
          <svg viewBox="0 0 24 24" className="size-6">
            <path d="M12.5 1 L18 5 L17.4 10 L20.4 15 L17.6 22 L12 21 L4 17.6 L7 12 L8 5 Z" fill="#8c5bd8" />
            <path d="M12.5 1 L8 5 L7 12 L11 14 Z" fill="#a986ec" />
            <path d="M4 17.6 L7 12 L11 14 L12 21 Z" fill="#6f3fc6" />
            <path d="M12.5 1 L18 5 L17.4 10 L11 14 Z" fill="#c4aaf5" />
            <path d="M17.4 10 L20.4 15 L17.6 22 L12 21 Z" fill="#59309f" />
          </svg>
        </TaskbarApp>
      </div>

      <div className="flex items-center justify-end pr-5 text-[#222]">
        <button aria-label="Show hidden icons">
          <Chevron dir="up" className="size-3" />
        </button>
        <svg viewBox="0 0 18 16" className="ml-[17px] h-4 w-[18px]" aria-hidden="true">
          <path d="M4 12 A3.6 3.6 0 0 1 3.6 5.4 A5 5 0 0 1 13 5 A3.6 3.6 0 0 1 14 12 Z" fill="#8c8c8c" stroke="#222" />
          <circle cx="13" cy="10.6" r="5" fill="#edf0f0" />
          <path d="M9.6 9.6 A3.6 3.6 0 0 1 16 8.6 M16.4 11.6 A3.6 3.6 0 0 1 10 12.6 M16.4 6.4 V9 H14 M9.6 14.8 V12.2 H12" fill="none" stroke="#1173c5" strokeWidth="1.4" />
        </svg>
        <svg viewBox="0 0 14 16" className="ml-[17px] h-4 w-3.5" fill="none" stroke="#1f5fae" strokeWidth="1.3" aria-hidden="true">
          <rect x="4.4" y=".7" width="5.2" height="9.6" rx="2.6" />
          <path d="M1.6 7.6 a5.4 5.4 0 0 0 10.8 0 M7 13 V15.6" />
        </svg>
        <svg viewBox="0 0 16 16" className="ml-[17px] size-4" fill="none" stroke="currentColor" strokeWidth="1.1" aria-hidden="true">
          <path d="M10 1.5 H1 V12 H12.6 V7 M5.4 12 V15 M8.6 12 V15 M3.4 15.2 H10.6" />
          <rect x="11.6" y="1" width="3.6" height="5" />
        </svg>
        <svg viewBox="0 0 16 16" className="ml-2 size-4" fill="none" stroke="currentColor" strokeWidth="1.1" aria-hidden="true">
          <path d="M.8 6 H3 L7 2.6 V13.4 L3 10 H.8 Z M9 6 Q10.4 8 9 10 M11 4.4 Q13.4 8 11 11.6" />
          <path d="M13 3 Q16.2 8 13 13" stroke="#b5b5b5" />
        </svg>
        <button className="ml-4 w-[55px] text-right leading-4">
          <span className="block">10:24 AM</span>
          <span className="block">1/30/2025</span>
        </button>
      </div>
    </footer>
  );
}

export default function App() {
  return (
    <div className="relative flex min-h-screen flex-col overflow-hidden font-['Open_Sans',sans-serif]">
      <BrowserBar />
      <NextcloudPage />
      <Taskbar />
      <OpenDialog />

      {/* Mouse pointer over the hovered file */}
      <svg viewBox="0 0 13 20" className="pointer-events-none absolute top-[488px] left-[342px] z-20 h-5 w-[13px]" aria-hidden="true">
        <path d="M.7 .9 V15.4 L4.2 12.2 L6.6 18 L9 17 L6.6 11.4 H11.6 Z" fill="#fff" stroke="#222" strokeWidth=".9" />
      </svg>
    </div>
  );
}
